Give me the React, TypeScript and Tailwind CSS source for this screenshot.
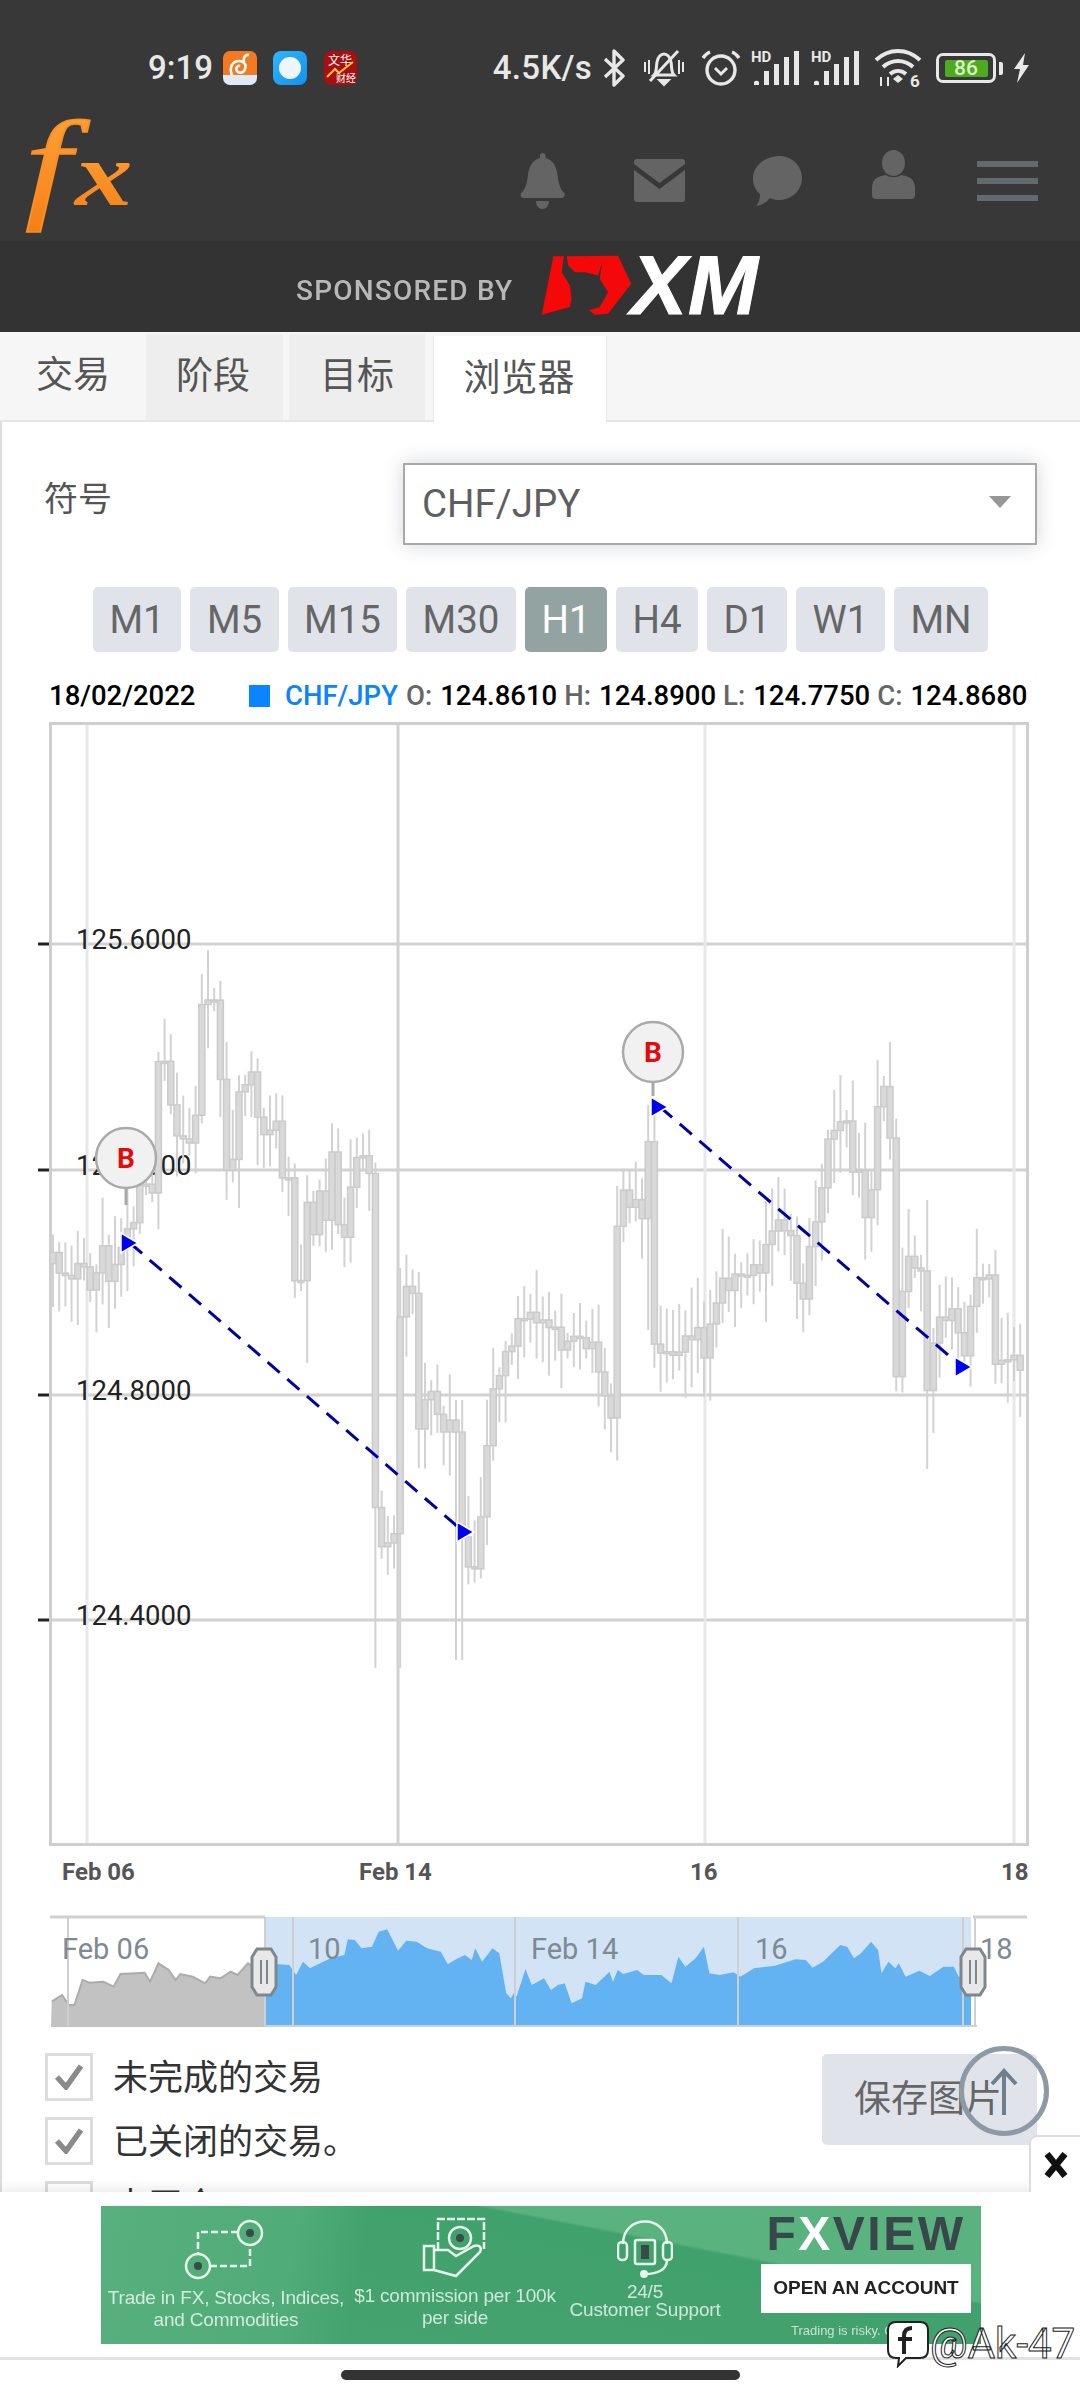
import React from "react";

const P: [number, number][] = [[52,1263],[62,1268],[83,1273],[88,1297],[103,1247],[107,1297],[115,1265],[126,1222],[138,1233],[139,1190],[158,1190],[158,1070],[169,1070],[172,1137],[191,1143],[191,1122],[198,1120],[198,1025],[203,992],[217,990],[217,1088],[224,1087],[224,1165],[238,1162],[238,1082],[251,1078],[255,1127],[275,1125],[279,1143],[282,1173],[294,1177],[294,1278],[303,1280],[305,1208],[315,1228],[318,1183],[325,1228],[332,1150],[341,1243],[350,1243],[350,1185],[358,1150],[367,1145],[370,1187],[372,1476],[378,1545],[395,1537],[401,1293],[413,1300],[416,1453],[428,1369],[441,1430],[459,1423],[462,1537],[474,1575],[483,1491],[490,1400],[517,1323],[554,1316],[558,1338],[597,1353],[612,1430],[618,1193],[642,1209],[649,1140],[654,1340],[678,1350],[685,1328],[702,1330],[705,1357],[712,1320],[722,1283],[747,1270],[764,1267],[769,1235],[781,1223],[795,1230],[795,1293],[809,1287],[809,1247],[815,1230],[821,1183],[827,1155],[833,1123],[846,1108],[852,1148],[853,1182],[860,1173],[860,1250],[872,1195],[872,1143],[879,1093],[886,1093],[891,1142],[891,1373],[898,1373],[902,1288],[910,1243],[914,1263],[924,1263],[924,1383],[931,1383],[933,1337],[939,1310],[950,1310],[955,1333],[963,1337],[963,1367],[969,1313],[974,1285],[994,1280],[994,1362],[1007,1370],[1013,1350],[1022,1362],[1028,1360]];

function at(x: number) {
  for (let i = 1; i < P.length; i++) {
    if (x <= P[i][0]) {
      const [a, b] = P[i - 1];
      const [c, d] = P[i];
      return c === a ? d : b + ((d - b) * (x - a)) / (c - a);
    }
  }
  return P[P.length - 1][1];
}

const SPECIAL: Record<number, [number, number]> = { 210: [955, 1040], 306: [1200, 1363], 374: [1300, 1560], 378: [1400, 1668], 398: [1290, 1668], 459: [1400, 1660], 926: [1200, 1469], 649: [1105, 1330], 880: [1060, 1140], 840: [1075, 1160] };

function candles() {
  const out: { x: number; o: number; c: number; h: number; l: number }[] = [];
  let s = 17;
  const r = () => {
    s = (s * 16807) % 2147483647;
    return s / 2147483647;
  };
  let prev = at(53);
  for (let x = 53; x < 1026; x += 6.2) {
    const c = at(x) + (r() - 0.5) * 22;
    const o = prev;
    prev = c;
    let h = Math.min(o, c) - 8 - r() * 42;
    let l = Math.max(o, c) + 8 + r() * 42;
    for (const k of Object.keys(SPECIAL)) {
      if (Math.abs(Number(k) - x) < 3.2) {
        h = Math.min(h, SPECIAL[Number(k)][0]);
        l = Math.max(l, SPECIAL[Number(k)][1]);
      }
    }
    out.push({ x, o, c, h, l });
  }
  return out;
}

const NAV_RAW: [number, number][] = [[75,545],[90,525],[100,555],[108,555],[120,480],[130,488],[150,485],[165,500],[175,462],[210,458],[218,485],[230,430],[245,450],[255,480],[262,462],[280,470],[298,490],[305,470],[320,475],[335,455],[345,465],[360,430],[368,440],[385,430],[420,435],[430,465],[440,425],[450,445],[480,415],[500,405],[505,358],[515,360],[525,385],[540,380],[550,335],[562,328],[578,392],[590,362],[605,365],[620,385],[640,395],[650,432],[665,415],[675,405],[685,420],[690,385],[700,425],[715,385],[725,400],[735,520],[742,535],[747,515],[750,530],[763,447],[772,495],[790,475],[800,510],[810,495],[820,490],[830,550],[845,535],[850,485],[865,495],[885,455],[890,485],[897,450],[905,462],[925,450],[935,465],[960,465],[975,490],[985,410],[995,440],[1010,415],[1022,380],[1030,460],[1045,465],[1065,457],[1075,470],[1095,445],[1125,437],[1155,418],[1170,420],[1180,443],[1195,425],[1220,375],[1230,380],[1240,415],[1250,400],[1265,365],[1275,390],[1280,460],[1290,425],[1300,445],[1305,430],[1315,470],[1335,452],[1350,468],[1370,440],[1385,440],[1392,470],[1410,470]];
const NAV = NAV_RAW.map(([x, y]) => [x / 1.452, 1820 + y / 3] as [number, number]);
const navLine = (a: [number, number][]) => a.map(([x, y]) => `${x.toFixed(1)},${y.toFixed(1)}`).join(" ");
const greyPts = NAV.filter(([x]) => x <= 266);
const bluePts = NAV.filter(([x]) => x >= 264);

function Chart() {
  const cs = candles();
  const ys = [944, 1170, 1395, 1620];
  const labels = ["125.6000", "125.2000", "124.8000", "124.4000"];
  return (
    <svg viewBox="0 722 1080 1173" className="block w-[1080px] h-[1173px] shrink-0 -ml-[2px]">
      {ys.map((y) => (
        <line key={y} x1={50} x2={1027} y1={y} y2={y} stroke="#d2d2d2" strokeWidth={3} />
      ))}
      <line x1={87} x2={87} y1={722} y2={1845} stroke="#e8e8e8" strokeWidth={3} />
      <line x1={398} x2={398} y1={722} y2={1845} stroke="#d2d2d2" strokeWidth={3} />
      <line x1={705} x2={705} y1={722} y2={1845} stroke="#e8e8e8" strokeWidth={3} />
      <line x1={1014} x2={1014} y1={722} y2={1845} stroke="#e8e8e8" strokeWidth={3} />
      <rect x={50.5} y={723.5} width={977} height={1121} fill="none" stroke="#cfcfcf" strokeWidth={3} />
      {ys.map((y) => (
        <line key={y} x1={38} x2={49} y1={y} y2={y} stroke="#222" strokeWidth={3} />
      ))}
      {labels.map((t, i) => (
        <text key={t} x={76} y={ys[i] + 5} fontSize={27.5} fill="#222" fontFamily="Roboto">
          {t}
        </text>
      ))}
      {cs.map((c, i) => (
        <g key={i}>
          <line x1={c.x} x2={c.x} y1={c.h} y2={c.l} stroke="#d2d2d2" strokeWidth={2} />
          <rect x={c.x - 3} y={Math.min(c.o, c.c)} width={6} height={Math.max(2, Math.abs(c.o - c.c))} fill="#d9d9d9" stroke="#cbcbcb" strokeWidth={1.5} />
        </g>
      ))}
      <line x1={130} y1={1243} x2={465} y2={1533} stroke="#0000aa" strokeWidth={3} strokeDasharray="16 10" />
      <line x1={660} y1={1107} x2={962} y2={1367} stroke="#0000aa" strokeWidth={3} strokeDasharray="16 10" />
      {[[121, 1243], [457, 1532], [651, 1107], [955, 1367]].map(([x, y]) => (
        <polygon key={x} points={`${x},${y - 10} ${x + 17},${y} ${x},${y + 10}`} fill="#0000f0" stroke="#fff" strokeWidth={1.5} />
      ))}
      {[[126, 1158, 1205], [653, 1052, 1096]].map(([x, y, e]) => (
        <g key={x}>
          <line x1={x} x2={x} y1={y + 30} y2={e} stroke="#a8a8a8" strokeWidth={3} />
          <circle cx={x} cy={y} r={30} fill="#f1f1f1" stroke="#aaaaaa" strokeWidth={2.5} />
          <text x={x} y={y + 10} textAnchor="middle" fontSize={28} fontWeight={700} fill="#e30b0b" fontFamily="Roboto">
            B
          </text>
        </g>
      ))}
      {[["Feb 06", 62], ["Feb 14", 359], ["16", 690], ["18", 1001]].map(([t, x]) => (
        <text key={t} x={x} y={1880} fontSize={24} fontWeight={700} fill="#555" fontFamily="Roboto">
          {t}
        </text>
      ))}
    </svg>
  );
}

function Handle({ x }: { x: number }) {
  return (
    <g>
      <polygon points={`${x + 5},1949 ${x + 19},1949 ${x + 24},1957 ${x + 24},1987 ${x + 19},1995 ${x + 5},1995 ${x},1987 ${x},1957`} fill="#e8e8e8" stroke="#7f878c" strokeWidth={3} />
      <line x1={x + 9} x2={x + 9} y1={1960} y2={1984} stroke="#7f878c" strokeWidth={2} />
      <line x1={x + 15} x2={x + 15} y1={1960} y2={1984} stroke="#7f878c" strokeWidth={2} />
    </g>
  );
}

function Navigator() {
  return (
    <svg viewBox="0 1895 1080 135" className="block w-[1080px] h-[135px] shrink-0 -ml-[2px]">
      <rect x={265} y={1917} width={706} height={108} fill="#d1e3f5" />
      <polygon points={`${navLine(greyPts)} 265,2027 51,2027`} fill="#c2c2c2" />
      <polyline points={navLine(greyPts)} fill="none" stroke="#acacac" strokeWidth={2} />
      <polygon points={`${navLine(bluePts)} 971,2025 265,2025`} fill="#63b3f3" />
      <line x1={50} x2={265} y1={1917} y2={1917} stroke="#d0d0d0" strokeWidth={3} />
      <line x1={265} x2={265} y1={1917} y2={2026} stroke="#d0d0d0" strokeWidth={2} />
      <line x1={973} x2={1027} y1={1917} y2={1917} stroke="#d0d0d0" strokeWidth={3} />
      <line x1={975} x2={975} y1={1917} y2={2026} stroke="#d0d0d0" strokeWidth={2} />
      <line x1={265} x2={977} y1={2026} y2={2026} stroke="#c3d3e3" strokeWidth={2} />
      {[68, 293, 515, 738, 963].map((x) => (
        <line key={x} x1={x} x2={x} y1={1917} y2={2026} stroke="#cfcfcf" strokeWidth={2} />
      ))}
      {[["Feb 06", 62], ["10", 308], ["Feb 14", 531], ["16", 755], ["18", 980]].map(([t, x]) => (
        <text key={t} x={x} y={1959} fontSize={29} fill="#7e8a92" fontFamily="Roboto">
          {t}
        </text>
      ))}
      <Handle x={252} />
      <Handle x={961} />
    </svg>
  );
}

function Check({ checked }: { checked: boolean }) {
  return (
    <div className="w-[48px] h-[48px] border-[3px] border-[#dddddd] bg-white flex items-center justify-center shrink-0">
      {checked && (
        <svg width="30" height="26" viewBox="0 0 30 26">
          <path d="M3 13l9 10L27 2" fill="none" stroke="#8a8a8a" strokeWidth="5.500" />
        </svg>
      )}
    </div>
  );
}

function StatusIcons() {
  return (
    <div className="flex items-center">
      <svg width="24" height="38" viewBox="0 0 24 38" className="ml-[10px]">
        <path d="M3 10l18 17-9 9V2l9 9L3 28" fill="none" stroke="#e8e8e8" strokeWidth="3.4" strokeLinejoin="round" />
      </svg>
      <svg width="44" height="38" viewBox="0 0 44 38" className="ml-[16px]">
        <path d="M12 26c3-3 2-8 3-13 1-5 4-8 7-8s6 3 7 8c1 5 0 10 3 13H12z" fill="none" stroke="#e8e8e8" strokeWidth="3" />
        <path d="M8 32L36 2" stroke="#e8e8e8" strokeWidth="3" />
        <path d="M17 31h10l-5 5zM3 13v10M7 11v14M37 11v14M41 13v10" fill="#e8e8e8" stroke="#e8e8e8" strokeWidth="2" />
      </svg>
      <svg width="40" height="38" viewBox="0 0 40 38" className="ml-[15px]">
        <circle cx="20" cy="21" r="14" fill="none" stroke="#e8e8e8" strokeWidth="3.4" />
        <path d="M14 19l6 6 6-6" fill="none" stroke="#e8e8e8" strokeWidth="3" />
        <path d="M2 9c2-3 4-5 7-6M38 9c-2-3-4-5-7-6" fill="none" stroke="#e8e8e8" strokeWidth="3.4" />
      </svg>
      {[0, 1].map((i) => (
        <div key={i} className="relative w-[50px] h-[34px] ml-[10px]">
          <span className="absolute left-0 top-[-2px] text-[15px] font-bold leading-[16px] text-[#e8e8e8] font-['Roboto']">HD</span>
          <svg width="50" height="34" viewBox="0 0 50 34" className="absolute inset-0">
            <path d="M3 34v-3a3 3 0 0 1 5 0v3zM13 34V20h5v14zM23 34V13h5v21zM33 34V6h5v28zM43 34V0h5v34z" fill="#e8e8e8" />
          </svg>
        </div>
      ))}
      <svg width="48" height="40" viewBox="0 0 48 40" className="ml-[13px]">
        <path d="M2 12c13-12 31-12 44 0M9 19c9-8 21-8 30 0M16 26c5-4 11-4 16 0" fill="none" stroke="#e8e8e8" strokeWidth="4" />
        <path d="M19 31l5-4 5 4-5 4z" fill="#e8e8e8" />
        <path d="M7 29v9M14 29v9" stroke="#e8e8e8" strokeWidth="2" />
        <text x="36" y="39" fontSize="17" fontWeight="700" fill="#e8e8e8" fontFamily="Roboto">6</text>
      </svg>
      <div className="ml-[14px] relative w-[60px] h-[30px] rounded-[7px] border-[3.5px] border-[#e8e8e8] flex items-center justify-center">
        <div className="w-[43px] h-[17px] bg-[#4eaa1e] rounded-[2px] flex items-center justify-center text-[21px] font-medium leading-none text-[#d9f3c7] font-['Roboto']">86</div>
      </div>
      <div className="ml-[3px] w-[4px] h-[13px] bg-[#e8e8e8] rounded-r-[2px]" />
      <svg width="18" height="30" viewBox="0 0 18 30" className="ml-[9px]">
        <path d="M13 0L2 16h6L5 30l12-18h-6z" fill="#e8e8e8" />
      </svg>
    </div>
  );
}

function TopBar() {
  return (
    <div className="bg-[#383838] h-[241px] shrink-0 flex flex-col">
      <div className="h-[132px] flex items-center pl-[148px] pr-[50px] pt-[4px]">
        <span className="text-[33px] font-medium text-[#e8e8e8]">9:19</span>
        <div className="ml-[10px] w-[34px] h-[34px] rounded-[7px] overflow-hidden bg-[linear-gradient(#f47a22_72%,#dfeaf6_72%)] flex items-start justify-center pt-[1px]">
          <svg width="26" height="24" viewBox="0 0 26 24"><path d="M5 23c-3-7 0-14 7-14 5 0 8 4 6 8-1 4-6 5-8 2s1-6 3-5M17 10c-1-4 1-8 5-7" fill="none" stroke="#fff" strokeWidth="2.600" /></svg>
        </div>
        <div className="ml-[16px] w-[34px] h-[34px] rounded-[8px] bg-[linear-gradient(135deg,#2fb6fb,#1291f0)] flex items-center justify-center">
          <div className="w-[22px] h-[22px] bg-[#eef7ff] rounded-full" />
        </div>
        <div className="ml-[17px] w-[33px] h-[34px] rounded-[7px] bg-[#a80f10] overflow-hidden">
          <svg width="33" height="34" viewBox="0 0 33 34">
            <text x="4" y="14" fontSize="12" fill="#fff" fontFamily="Noto Sans CJK SC">文华</text>
            <path d="M3 26l8-8 4 4 14-11" fill="none" stroke="#f8c33a" strokeWidth="2" />
            <text x="12" y="31" fontSize="10" fill="#fff" fontFamily="Noto Sans CJK SC">财经</text>
          </svg>
        </div>
        <span className="ml-auto text-[33px] font-medium tracking-[0.3px] text-[#e8e8e8]">4.5K/s</span>
        <StatusIcons />
      </div>
      <div className="flex-1 flex items-center pl-[3px] pr-[42px]">
        <svg width="150" height="115" viewBox="0 0 150 115" className="-mt-[24px] overflow-visible">
          <defs>
            <linearGradient id="fxg" x1="0" y1="0" x2="0" y2="1">
              <stop offset="0" stopColor="#fca63e" />
              <stop offset="1" stopColor="#f77f14" />
            </linearGradient>
          </defs>
          <text transform="translate(22,89) scale(1.35,1)" fontSize="122" fontStyle="italic" fill="url(#fxg)" stroke="#f98f25" strokeWidth="1.500" fontFamily="Liberation Serif">f</text>
          <text transform="translate(72,88) scale(1.25,1)" fontSize="92" fontStyle="italic" fontWeight="700" fill="url(#fxg)" fontFamily="Liberation Serif">x</text>
        </svg>
        <div className="ml-auto flex items-center mb-[12px]">
          <svg width="45" height="56" viewBox="0 0 45 56">
            <path d="M22.500 0c2 0 3 1 3 3v2c8 2 11 9 12 17 1 9 3 15 7 18 1 3-1 5-3 5H4c-3 0-4-2-3-5 4-3 6-9 7-18C9 14 12 7 20 5V3c0-2 1-3 2.500-3zM16 48h13c0 5-3 8-6.500 8S16 53 16 48z" fill="#646464" />
          </svg>
          <svg width="51" height="43" viewBox="0 0 51 43" className="ml-[69px]">
            <path d="M3 0h45c2 0 3 1 3 3v2L25.500 24 0 5V3c0-2 1-3 3-3zM0 11l25.500 19L51 11v29c0 2-1 3-3 3H3c-2 0-3-1-3-3z" fill="#646464" />
          </svg>
          <svg width="50" height="50" viewBox="0 0 50 50" className="ml-[67px]">
            <path d="M27 0c13 0 23 10 23 22S40 44 27 44c-3 0-6-.5-9-2-3 4-8 7-14 8 3-3 4-7 4-12C3 34 1 28 1 22 1 10 13 0 27 0z" fill="#646464" />
          </svg>
          <svg width="43" height="49" viewBox="0 0 43 49" className="ml-[70px] mb-[13px]">
            <ellipse cx="21.500" cy="13" rx="11.500" ry="13" fill="#646464" />
            <path d="M14 25c4 3 11 3 15 0 8 1 14 4 14 13v7c0 3-2 4-4 4H4c-2 0-4-1-4-4v-7c0-9 6-12 14-13z" fill="#646464" />
          </svg>
          <div className="ml-[62px] w-[61px] flex flex-col gap-[11px]">
            <div className="h-[6px] bg-[#626a70]" />
            <div className="h-[6px] bg-[#626a70]" />
            <div className="h-[6px] bg-[#626a70]" />
          </div>
        </div>
      </div>
    </div>
  );
}

function Sponsored() {
  return (
    <div className="bg-[#333333] h-[91px] shrink-0 flex items-center pl-[296px]">
      <span className="w-[216px] whitespace-nowrap text-[28px] font-medium tracking-[1.2px] text-[#b8b8b8] leading-none mt-[8px] blur-[0.5px]">SPONSORED BY</span>
      <svg width="93" height="61" viewBox="60 38 280 184" className="ml-[28px] mt-[-3px]">
        <path d="M100 42L132 42 125 90 150 130 155 170 150 195 65 218z" fill="#f40808" />
        <path d="M140 42L295 40 335 125 265 215 225 218 208 205 240 195 265 150 240 110 248 60 235 100 195 90 165 90 145 70z" fill="#f40808" />
      </svg>
      <span className="text-[84px] font-bold italic leading-none text-white font-['Liberation_Sans'] [-webkit-text-stroke:1px_#ffffff] tracking-[1px] -ml-[2px] mt-[-3px]">XM</span>
    </div>
  );
}

function Tabs() {
  return (
    <div className="h-[90px] shrink-0 bg-[#f6f6f6] border-b-2 border-[#e6e6e6] flex pl-[3px] text-[37px] text-[#555555]">
      <div className="w-[140px] mr-[2px] flex items-center justify-center">交易</div>
      <div className="ml-[1px] w-[137px] mt-[2px] bg-[#eeeeee] flex items-center justify-center pr-[3px]">阶段</div>
      <div className="ml-[6px] w-[136px] mt-[2px] bg-[#eeeeee] flex items-center justify-center">目标</div>
      <div className="ml-[8px] w-[174px] mt-[4px] -mb-[2px] bg-white border-x border-[#e8e8e8] flex items-center justify-center pr-[2px]">浏览器</div>
    </div>
  );
}

const FRAMES = [
  { t: "M1", c: "w-[88px] bg-[#e0e4ea] text-[#666666]" },
  { t: "M5", c: "w-[89px] bg-[#e0e4ea] text-[#666666]" },
  { t: "M15", c: "w-[109px] bg-[#e0e4ea] text-[#666666]" },
  { t: "M30", c: "w-[110px] bg-[#e0e4ea] text-[#666666]" },
  { t: "H1", c: "w-[82px] bg-[#93a3a2] text-white" },
  { t: "H4", c: "w-[82px] bg-[#e0e4ea] text-[#666666]" },
  { t: "D1", c: "w-[80px] bg-[#e0e4ea] text-[#666666]" },
  { t: "W1", c: "w-[89px] bg-[#e0e4ea] text-[#666666]" },
  { t: "MN", c: "w-[94px] bg-[#e0e4ea] text-[#666666]" },
];

function Quote() {
  const L = "text-[#666666]";
  return (
    <div className="h-[32px] mt-[28px] mb-[10px] pl-[47px] flex items-center text-[27.5px] font-medium text-black leading-none">
      <span className="w-[200px]">18/02/2022</span>
      <span className="w-[21px] h-[22px] bg-[#0a84ff]" />
      <span className="ml-[15px] text-[#0a84ff]">CHF/JPY</span>
      <span className={`ml-[8px] ${L}`}>O:</span>
      <span className="ml-[8px]">124.8610</span>
      <span className={`ml-[7px] ${L}`}>H:</span>
      <span className="ml-[8px]">124.8900</span>
      <span className={`ml-[7px] ${L}`}>L:</span>
      <span className="ml-[8px]">124.7750</span>
      <span className={`ml-[7px] ${L}`}>C:</span>
      <span className="ml-[8px]">124.8680</span>
    </div>
  );
}

function Main() {
  return (
    <div className="flex-1 min-h-0 overflow-hidden border-l-2 border-[#dddddd] bg-white">
      <div className="flex items-start pt-[41px] pl-[42px]">
        <span className="mt-[14px] w-[68px] text-[34px] text-[#555555] leading-[44px]">符号</span>
        <div className="ml-[291px] w-[634px] h-[82px] border-2 border-[#a8a8a8] shadow-[0_0_18px_rgba(60,70,90,0.22)] bg-white flex items-center pl-[17px] pr-[24px]">
          <span className="text-[38.5px] text-[#5f5f5f]">CHF/JPY</span>
          <svg width="22" height="12" viewBox="0 0 22 12" className="ml-auto mb-[4px]">
            <path d="M0 0h22L11 12z" fill="#979797" />
          </svg>
        </div>
      </div>
      <div className="flex gap-[9px] mt-[42px] ml-[91px]">
        {FRAMES.map((f) => (
          <div key={f.t} className={`h-[65px] rounded-[5px] flex items-center justify-center text-[38.5px] ${f.c}`}>
            {f.t}
          </div>
        ))}
      </div>
      <Quote />
      <Chart />
      <Navigator />
      <div className="flex items-start pl-[43px] mt-[23px]">
        <div className="flex flex-col gap-[16px] w-[777px]">
          <div className="flex items-center gap-[20px] h-[48px]">
            <Check checked />
            <span className="text-[35px] text-[#333333] mt-[4px]">未完成的交易</span>
          </div>
          <div className="flex items-center gap-[20px] h-[48px]">
            <Check checked />
            <span className="text-[35px] text-[#333333] mt-[4px]">已关闭的交易。</span>
          </div>
          <div className="flex items-center gap-[20px] h-[48px]">
            <Check checked={false} />
            <span className="text-[35px] text-[#333333] mt-[4px]">未平仓</span>
          </div>
        </div>
        <div className="w-[215px] h-[91px] mt-[1px] pr-[3px] rounded-[5px] bg-[#e0e4ea] flex items-center justify-center text-[37px] text-[#666666]">保存图片</div>
      </div>
    </div>
  );
}

function Ad() {
  return (
    <div className="relative h-[208px] shrink-0 bg-white shadow-[0_-5px_10px_rgba(0,0,0,0.07)]">
      <div className="pt-[14px] pl-[101px]">
        <div className="w-[880px] h-[138px] flex bg-[linear-gradient(100deg,#57b07d_0%,#50ac78_22%,rgba(80,172,120,0)_30%),linear-gradient(191deg,#5ab27f_0%,#5ab27f_31%,#41a16c_32%,#45a370_100%)] text-white/75 text-center font-['Liberation_Sans'] blur-[0.7px] overflow-hidden">
          <div className="w-[250px] flex flex-col items-center pt-[12px]">
            <svg width="84" height="64" viewBox="0 0 84 64">
              <g fill="none" stroke="#e8f5ec" strokeWidth="2.500">
                <circle cx="66" cy="15" r="12" />
                <circle cx="14" cy="48" r="12" />
                <path d="M54 14H14v22M26 48h40V27" strokeDasharray="7 3" />
              </g>
              <circle cx="66" cy="15" r="4" fill="#3b4a48" />
              <circle cx="14" cy="48" r="4" fill="#3b4a48" />
            </svg>
            <div className="text-[19px] leading-[22px] mt-[5px] whitespace-nowrap tracking-[-0.2px]">Trade in FX, Stocks, Indices,<br />and Commodities</div>
          </div>
          <div className="w-[208px] flex flex-col items-center pt-[10px]">
            <svg width="66" height="66" viewBox="0 0 66 66">
              <g fill="none" stroke="#e8f5ec" strokeWidth="2.500">
                <path d="M16 34V3h46v30" strokeDasharray="8 2" />
                <circle cx="38" cy="22" r="11" />
                <path d="M2 30h10v24H2zM12 34l14 0 8 6 18-10c6-2 8 2 6 6L34 60l-22-6" />
              </g>
              <circle cx="38" cy="22" r="4" fill="#3b4a48" />
            </svg>
            <div className="text-[19px] leading-[22px] mt-[3px] whitespace-nowrap tracking-[-0.2px]">$1 commission per 100k<br />per side</div>
          </div>
          <div className="w-[172px] flex flex-col items-center pt-[12px]">
            <svg width="56" height="60" viewBox="0 0 56 60">
              <g fill="none" stroke="#e8f5ec" strokeWidth="2.500">
                <path d="M6 26C6 -4 50 -4 50 26" />
                <rect x="1" y="24" width="9" height="18" rx="4" />
                <rect x="46" y="24" width="9" height="18" rx="4" />
                <rect x="18" y="22" width="20" height="24" rx="2" />
                <path d="M50 42c0 10-10 14-22 14" />
              </g>
              <rect x="24" y="27" width="8" height="14" fill="#3b4a48" />
              <circle cx="27" cy="56" r="4" fill="#e8f5ec" />
            </svg>
            <div className="text-[19px] leading-[18px] mt-[5px] whitespace-nowrap tracking-[-0.2px]">24/5<br />Customer Support</div>
          </div>
          <div className="ml-[30px] w-[210px] flex flex-col items-center">
            <div className="mt-[7px] h-[42px] text-[48px] font-bold leading-[42px] text-[#38484a] tracking-[2.5px] whitespace-nowrap">
              F<span className="text-white">X</span>VIEW
            </div>
            <div className="mt-[9px] w-[210px] h-[49px] bg-white flex items-center justify-center text-[19px] font-bold text-[#222222] whitespace-nowrap">OPEN AN ACCOUNT</div>
            <div className="mt-[8px] text-[13px] self-start ml-[30px] text-white/70 whitespace-nowrap">Trading is risky. Capital</div>
          </div>
        </div>
      </div>
      <div className="mt-[13px] h-[3px] bg-[#e2e2e2]" />
      <div className="mt-[10px] mx-auto w-[399px] h-[10px] rounded-[5px] bg-[#333333]" />
    </div>
  );
}

export default function App() {
  return (
    <div className="relative w-[1080px] h-[2400px] overflow-hidden flex flex-col bg-white font-['Roboto','Noto_Sans_CJK_SC',sans-serif]">
      <TopBar />
      <Sponsored />
      <Tabs />
      <Main />
      <Ad />
      <div className="absolute left-[959px] top-[2046px] w-[90px] h-[90px] rounded-full border-[5px] border-[#8d9aa6] flex items-center justify-center">
        <svg width="30" height="48" viewBox="0 0 30 48">
          <path d="M15 48V4M3 17L15 4l12 13" fill="none" stroke="#6f7f8c" strokeWidth="4" />
        </svg>
      </div>
      <div className="absolute left-[1029px] top-[2135px] w-[51px] h-[57px] bg-white rounded-tl-[8px] border-l-2 border-t-2 border-[#dddddd] flex items-center justify-center">
        <svg width="24" height="26" viewBox="0 0 24 26">
          <path d="M3 2l18 22M21 2L3 24" stroke="#111111" strokeWidth="6.500" />
        </svg>
      </div>
      <div className="absolute left-[886px] top-[2320px] flex items-center">
        <svg width="44" height="48" viewBox="0 0 44 48">
          <path d="M10 2h24c5 0 8 3 8 8v20c0 5-3 8-8 8H20l-8 8 1-8h-3c-5 0-8-3-8-8V10c0-5 3-8 8-8z" fill="#fff" stroke="#222" strokeWidth="2" />
          <path d="M26 8c-6 0-8 3-8 8v18M12 19h14" fill="none" stroke="#222" strokeWidth="4" />
        </svg>
        <span className="text-[42px] leading-none text-white [-webkit-text-stroke:1px_#222222]">@Ak-47</span>
      </div>
    </div>
  );
}
